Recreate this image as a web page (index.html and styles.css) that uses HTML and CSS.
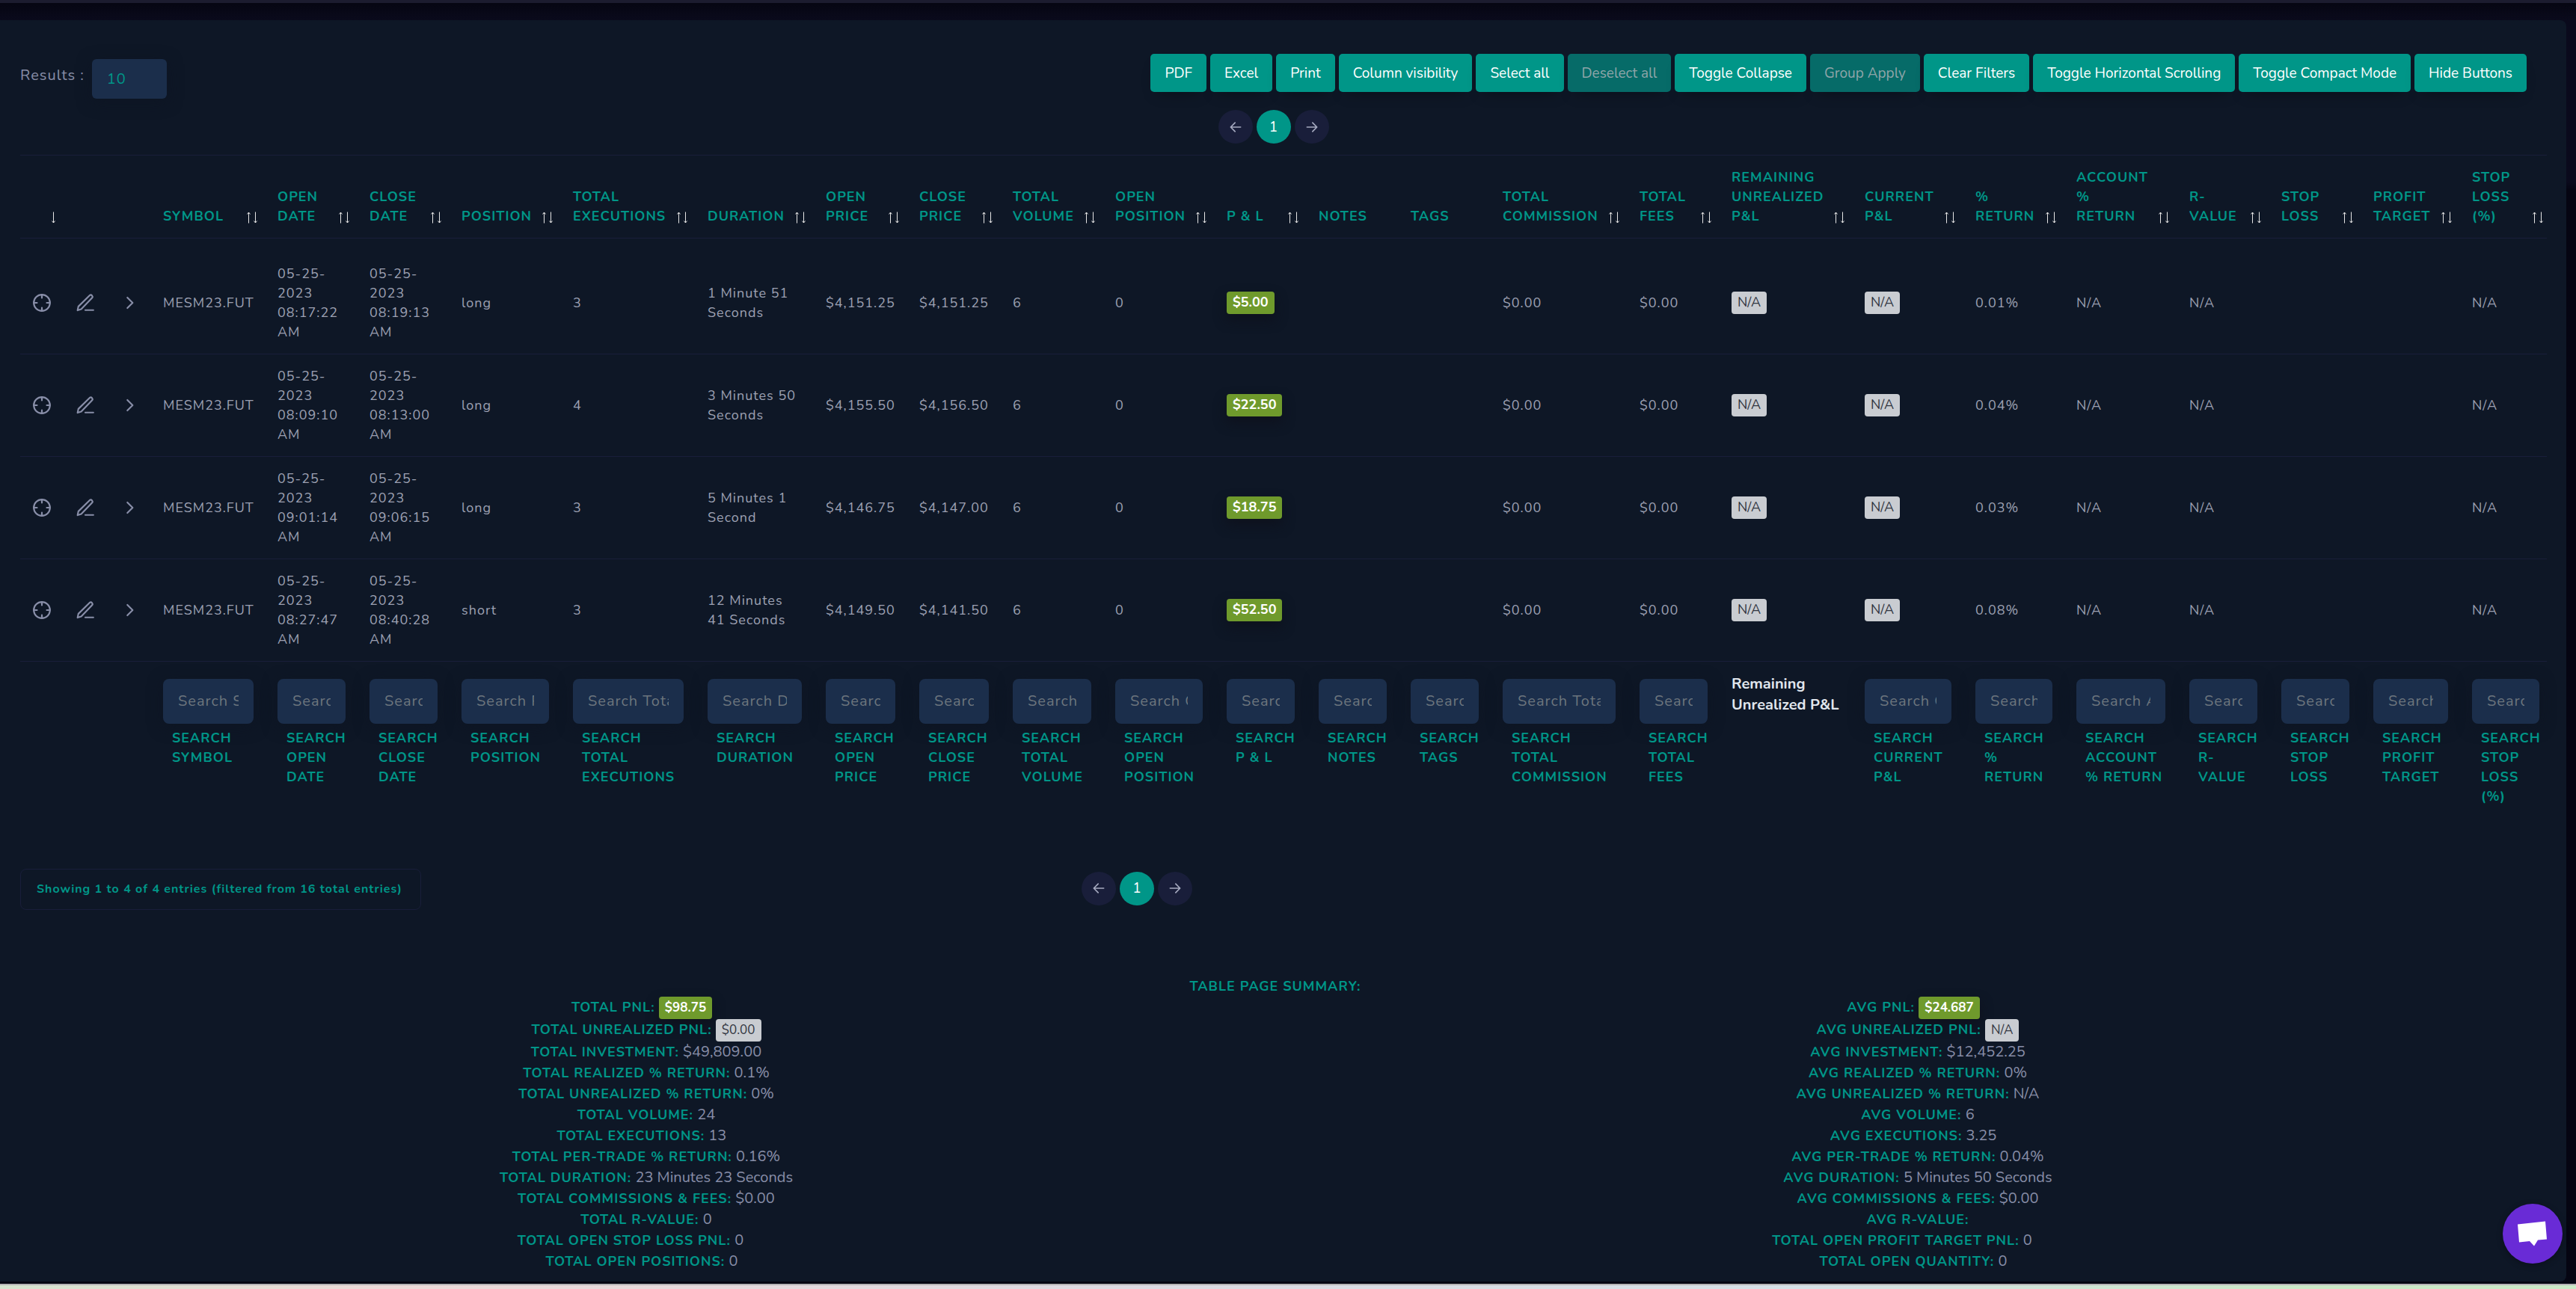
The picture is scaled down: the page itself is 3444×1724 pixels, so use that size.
FILE: index.html
```html
<!DOCTYPE html>
<html lang="en">
<head>
  <meta charset="UTF-8">
  <meta name="viewport" content="width=device-width, initial-scale=1.0">
  <title>Trades</title>
  <link rel="stylesheet" href="styles.css">
</head>
<body>
  <!-- Shared icons -->
  <svg class="icon-defs" aria-hidden="true">
    <symbol id="icon-sort" viewBox="0 0 16 16">
      <path d="M3.500 15.500V1M1.500 3.500L3.500 1L5.500 3.500M12.500 .5V15M10.500 12.500L12.500 15L14.500 12.500"></path>
    </symbol>
    <symbol id="icon-down" viewBox="0 0 16 16">
      <path d="M12.500 .5V15M10.500 12.500L12.500 15L14.500 12.500"></path>
    </symbol>
    <symbol id="icon-target" viewBox="0 0 24 24">
      <circle cx="12" cy="12" r="10"></circle>
      <path d="M22 12h-4M6 12H2M12 6V2M12 22v-4"></path>
    </symbol>
    <symbol id="icon-edit" viewBox="0 0 24 24">
      <path d="M12 21h10M17.500 2.700a2.200 2.200 0 0 1 3 3.100L7 19.800L2.500 21.300L3.500 16.500Z"></path>
    </symbol>
    <symbol id="icon-chevron" viewBox="0 0 24 24">
      <path d="M9.500 18.500l6.500-6.500-6.500-6.500"></path>
    </symbol>
    <symbol id="icon-prev" viewBox="0 0 24 24">
      <path d="M20 12H5M11 5l-7 7 7 7"></path>
    </symbol>
    <symbol id="icon-next" viewBox="0 0 24 24">
      <path d="M4 12h15M13 5l7 7-7 7"></path>
    </symbol>
  </svg>

  <main class="page">
    <div class="card">
      <!-- Toolbar -->
      <div class="toolbar">
        <div class="length">
          <label for="results">Results :</label>
          <select id="results" class="length-select">
            <option>10</option>
            <option>25</option>
            <option>50</option>
          </select>
        </div>
        <div class="buttons">
          <button class="btn">PDF</button>
          <button class="btn">Excel</button>
          <button class="btn">Print</button>
          <button class="btn">Column visibility</button>
          <button class="btn">Select all</button>
          <button class="btn" disabled>Deselect all</button>
          <button class="btn">Toggle Collapse</button>
          <button class="btn" disabled>Group Apply</button>
          <button class="btn">Clear Filters</button>
          <button class="btn">Toggle Horizontal Scrolling</button>
          <button class="btn">Toggle Compact Mode</button>
          <button class="btn">Hide Buttons</button>
        </div>
      </div>

      <nav class="pager" aria-label="Pages">
        <button class="page-btn" aria-label="Previous"><svg class="icon"><use href="#icon-prev"></use></svg></button>
        <button class="page-btn active">1</button>
        <button class="page-btn" aria-label="Next"><svg class="icon"><use href="#icon-next"></use></svg></button>
      </nav>

      <!-- Trades table -->
      <table class="trades">
        <colgroup>
          <col class="w-icon"><col class="w-icon"><col class="w-expand">
          <col class="w-symbol">
          <col class="w-s"><col class="w-s">
          <col class="w-position">
          <col class="w-executions">
          <col class="w-duration">
          <col class="w-price"><col class="w-price">
          <col class="w-volume">
          <col class="w-position">
          <col class="w-s"><col class="w-s"><col class="w-s">
          <col class="w-commission">
          <col class="w-s">
          <col class="w-unrealized">
          <col class="w-current">
          <col class="w-return">
          <col class="w-account">
          <col class="w-s"><col class="w-s">
          <col class="w-target">
          <col class="w-last">
        </colgroup>
        <thead>
          <tr>
            <th><div class="head"><svg class="sort"><use href="#icon-down"></use></svg></div></th>
            <th></th>
            <th></th>
            <th><div class="head">Symbol<svg class="sort"><use href="#icon-sort"></use></svg></div></th>
            <th><div class="head">Open<br>Date<svg class="sort"><use href="#icon-sort"></use></svg></div></th>
            <th><div class="head">Close<br>Date<svg class="sort"><use href="#icon-sort"></use></svg></div></th>
            <th><div class="head">Position<svg class="sort"><use href="#icon-sort"></use></svg></div></th>
            <th><div class="head">Total<br>Executions<svg class="sort"><use href="#icon-sort"></use></svg></div></th>
            <th><div class="head">Duration<svg class="sort"><use href="#icon-sort"></use></svg></div></th>
            <th><div class="head">Open<br>Price<svg class="sort"><use href="#icon-sort"></use></svg></div></th>
            <th><div class="head">Close<br>Price<svg class="sort"><use href="#icon-sort"></use></svg></div></th>
            <th><div class="head">Total<br>Volume<svg class="sort"><use href="#icon-sort"></use></svg></div></th>
            <th><div class="head">Open<br>Position<svg class="sort"><use href="#icon-sort"></use></svg></div></th>
            <th><div class="head">P &amp; L<svg class="sort"><use href="#icon-sort"></use></svg></div></th>
            <th>Notes</th>
            <th>Tags</th>
            <th><div class="head">Total<br>Commission<svg class="sort"><use href="#icon-sort"></use></svg></div></th>
            <th><div class="head">Total<br>Fees<svg class="sort"><use href="#icon-sort"></use></svg></div></th>
            <th><div class="head">Remaining<br>Unrealized<br>P&amp;L<svg class="sort"><use href="#icon-sort"></use></svg></div></th>
            <th><div class="head">Current<br>P&amp;L<svg class="sort"><use href="#icon-sort"></use></svg></div></th>
            <th><div class="head">%<br>Return<svg class="sort"><use href="#icon-sort"></use></svg></div></th>
            <th><div class="head">Account<br>%<br>Return<svg class="sort"><use href="#icon-sort"></use></svg></div></th>
            <th><div class="head">R-<br>Value<svg class="sort"><use href="#icon-sort"></use></svg></div></th>
            <th><div class="head">Stop<br>Loss<svg class="sort"><use href="#icon-sort"></use></svg></div></th>
            <th><div class="head">Profit<br>Target<svg class="sort"><use href="#icon-sort"></use></svg></div></th>
            <th><div class="head">Stop<br>Loss<br>(%)<svg class="sort"><use href="#icon-sort"></use></svg></div></th>
          </tr>
        </thead>
        <tbody>
          <tr class="spacer"><td colspan="26"></td></tr>
          <tr>
            <td class="action"><svg class="icon"><use href="#icon-target"></use></svg></td>
            <td class="action"><svg class="icon"><use href="#icon-edit"></use></svg></td>
            <td class="action"><svg class="icon"><use href="#icon-chevron"></use></svg></td>
            <td>MESM23.FUT</td>
            <td>05-25-<br>2023<br>08:17:22<br>AM</td>
            <td>05-25-<br>2023<br>08:19:13<br>AM</td>
            <td>long</td>
            <td>3</td>
            <td>1 Minute 51<br>Seconds</td>
            <td>$4,151.25</td>
            <td>$4,151.25</td>
            <td>6</td>
            <td>0</td>
            <td><span class="badge win">$5.00</span></td>
            <td></td>
            <td></td>
            <td>$0.00</td>
            <td>$0.00</td>
            <td><span class="badge">N/A</span></td>
            <td><span class="badge">N/A</span></td>
            <td>0.01%</td>
            <td>N/A</td>
            <td>N/A</td>
            <td></td>
            <td></td>
            <td>N/A</td>
          </tr>
          <tr>
            <td class="action"><svg class="icon"><use href="#icon-target"></use></svg></td>
            <td class="action"><svg class="icon"><use href="#icon-edit"></use></svg></td>
            <td class="action"><svg class="icon"><use href="#icon-chevron"></use></svg></td>
            <td>MESM23.FUT</td>
            <td>05-25-<br>2023<br>08:09:10<br>AM</td>
            <td>05-25-<br>2023<br>08:13:00<br>AM</td>
            <td>long</td>
            <td>4</td>
            <td>3 Minutes 50<br>Seconds</td>
            <td>$4,155.50</td>
            <td>$4,156.50</td>
            <td>6</td>
            <td>0</td>
            <td><span class="badge win">$22.50</span></td>
            <td></td>
            <td></td>
            <td>$0.00</td>
            <td>$0.00</td>
            <td><span class="badge">N/A</span></td>
            <td><span class="badge">N/A</span></td>
            <td>0.04%</td>
            <td>N/A</td>
            <td>N/A</td>
            <td></td>
            <td></td>
            <td>N/A</td>
          </tr>
          <tr>
            <td class="action"><svg class="icon"><use href="#icon-target"></use></svg></td>
            <td class="action"><svg class="icon"><use href="#icon-edit"></use></svg></td>
            <td class="action"><svg class="icon"><use href="#icon-chevron"></use></svg></td>
            <td>MESM23.FUT</td>
            <td>05-25-<br>2023<br>09:01:14<br>AM</td>
            <td>05-25-<br>2023<br>09:06:15<br>AM</td>
            <td>long</td>
            <td>3</td>
            <td>5 Minutes 1<br>Second</td>
            <td>$4,146.75</td>
            <td>$4,147.00</td>
            <td>6</td>
            <td>0</td>
            <td><span class="badge win">$18.75</span></td>
            <td></td>
            <td></td>
            <td>$0.00</td>
            <td>$0.00</td>
            <td><span class="badge">N/A</span></td>
            <td><span class="badge">N/A</span></td>
            <td>0.03%</td>
            <td>N/A</td>
            <td>N/A</td>
            <td></td>
            <td></td>
            <td>N/A</td>
          </tr>
          <tr>
            <td class="action"><svg class="icon"><use href="#icon-target"></use></svg></td>
            <td class="action"><svg class="icon"><use href="#icon-edit"></use></svg></td>
            <td class="action"><svg class="icon"><use href="#icon-chevron"></use></svg></td>
            <td>MESM23.FUT</td>
            <td>05-25-<br>2023<br>08:27:47<br>AM</td>
            <td>05-25-<br>2023<br>08:40:28<br>AM</td>
            <td>short</td>
            <td>3</td>
            <td>12 Minutes<br>41 Seconds</td>
            <td>$4,149.50</td>
            <td>$4,141.50</td>
            <td>6</td>
            <td>0</td>
            <td><span class="badge win">$52.50</span></td>
            <td></td>
            <td></td>
            <td>$0.00</td>
            <td>$0.00</td>
            <td><span class="badge">N/A</span></td>
            <td><span class="badge">N/A</span></td>
            <td>0.08%</td>
            <td>N/A</td>
            <td>N/A</td>
            <td></td>
            <td></td>
            <td>N/A</td>
          </tr>
        </tbody>
        <tfoot>
          <tr>
            <td></td>
            <td></td>
            <td></td>
            <td><input id="s-symbol" type="text" placeholder="Search Symbol"><label for="s-symbol">Search<br>Symbol</label></td>
            <td><input id="s-open-date" type="text" placeholder="Search Open Date"><label for="s-open-date">Search<br>Open<br>Date</label></td>
            <td><input id="s-close-date" type="text" placeholder="Search Close Date"><label for="s-close-date">Search<br>Close<br>Date</label></td>
            <td><input id="s-position" type="text" placeholder="Search Position"><label for="s-position">Search<br>Position</label></td>
            <td><input id="s-executions" type="text" placeholder="Search Total Executions"><label for="s-executions">Search<br>Total<br>Executions</label></td>
            <td><input id="s-duration" type="text" placeholder="Search Duration"><label for="s-duration">Search<br>Duration</label></td>
            <td><input id="s-open-price" type="text" placeholder="Search Open Price"><label for="s-open-price">Search<br>Open<br>Price</label></td>
            <td><input id="s-close-price" type="text" placeholder="Search Close Price"><label for="s-close-price">Search<br>Close<br>Price</label></td>
            <td><input id="s-volume" type="text" placeholder="Search Total Volume"><label for="s-volume">Search<br>Total<br>Volume</label></td>
            <td><input id="s-open-position" type="text" placeholder="Search Open Position"><label for="s-open-position">Search<br>Open<br>Position</label></td>
            <td><input id="s-pl" type="text" placeholder="Search P &amp; L"><label for="s-pl">Search<br>P &amp; L</label></td>
            <td><input id="s-notes" type="text" placeholder="Search Notes"><label for="s-notes">Search<br>Notes</label></td>
            <td><input id="s-tags" type="text" placeholder="Search Tags"><label for="s-tags">Search<br>Tags</label></td>
            <td><input id="s-commission" type="text" placeholder="Search Total Commission"><label for="s-commission">Search<br>Total<br>Commission</label></td>
            <td><input id="s-fees" type="text" placeholder="Search Total Fees"><label for="s-fees">Search<br>Total<br>Fees</label></td>
            <td class="foot-title">Remaining<br>Unrealized P&amp;L</td>
            <td><input id="s-current" type="text" placeholder="Search Current P&amp;L"><label for="s-current">Search<br>Current<br>P&amp;L</label></td>
            <td><input id="s-return" type="text" placeholder="Search % Return"><label for="s-return">Search<br>%<br>Return</label></td>
            <td><input id="s-account" type="text" placeholder="Search Account % Return"><label for="s-account">Search<br>Account<br>% Return</label></td>
            <td><input id="s-rvalue" type="text" placeholder="Search R-Value"><label for="s-rvalue">Search<br>R-<br>Value</label></td>
            <td><input id="s-stop" type="text" placeholder="Search Stop Loss"><label for="s-stop">Search<br>Stop<br>Loss</label></td>
            <td><input id="s-target" type="text" placeholder="Search Profit Target"><label for="s-target">Search<br>Profit<br>Target</label></td>
            <td><input id="s-stop-pct" type="text" placeholder="Search Stop Loss (%)"><label for="s-stop-pct">Search<br>Stop<br>Loss<br>(%)</label></td>
          </tr>
        </tfoot>
      </table>

      <div class="table-bottom">
        <div class="info">Showing 1 to 4 of 4 entries (filtered from 16 total entries)</div>
        <nav class="pager" aria-label="Pages">
          <button class="page-btn" aria-label="Previous"><svg class="icon"><use href="#icon-prev"></use></svg></button>
          <button class="page-btn active">1</button>
          <button class="page-btn" aria-label="Next"><svg class="icon"><use href="#icon-next"></use></svg></button>
        </nav>
      </div>

      <!-- Summary -->
      <h6 class="summary-title">Table Page Summary:</h6>
      <div class="summary">
        <div class="summary-col">
          <div class="inset"><b>Total PnL:</b> <span class="badge win">$98.75</span></div>
          <div><b>Total Unrealized PnL:</b> <span class="badge">$0.00</span></div>
          <div><b>Total Investment:</b> $49,809.00</div>
          <div><b>Total Realized % Return:</b> 0.1%</div>
          <div><b>Total Unrealized % Return:</b> 0%</div>
          <div><b>Total Volume:</b> 24</div>
          <div class="inset"><b>Total Executions:</b> 13</div>
          <div><b>Total Per-Trade % Return:</b> 0.16%</div>
          <div><b>Total Duration:</b> 23 Minutes 23 Seconds</div>
          <div><b>Total Commissions &amp; Fees:</b> $0.00</div>
          <div><b>Total R-Value:</b> 0</div>
          <div class="inset-wide"><b>Total Open Stop Loss PnL:</b> 0</div>
          <div class="inset"><b>Total Open Positions:</b> 0</div>
        </div>
        <div class="summary-col">
          <div class="inset"><b>Avg PnL:</b> <span class="badge win">$24.687</span></div>
          <div><b>Avg Unrealized PnL:</b> <span class="badge">N/A</span></div>
          <div><b>Avg Investment:</b> $12,452.25</div>
          <div><b>Avg Realized % Return:</b> 0%</div>
          <div><b>Avg Unrealized % Return:</b> N/A</div>
          <div><b>Avg Volume:</b> 6</div>
          <div class="inset"><b>Avg Executions:</b> 3.25</div>
          <div><b>Avg Per-Trade % Return:</b> 0.04%</div>
          <div><b>Avg Duration:</b> 5 Minutes 50 Seconds</div>
          <div><b>Avg Commissions &amp; Fees:</b> $0.00</div>
          <div><b>Avg R-Value:</b></div>
          <div class="inset-wide"><b>Total Open Profit Target PnL:</b> 0</div>
          <div class="inset"><b>Total Open Quantity:</b> 0</div>
        </div>
      </div>
    </div>
  </main>
  <div class="bottom-strip"></div>

  <button class="chat" aria-label="Open chat">
    <svg class="chat-icon" viewBox="0 0 40 34">
      <path d="M0 4.500L37 0.500L39 24.500L27 25.500L22 33.500L16 27L2 28.500Z"></path>
    </svg>
  </button>
</body>
</html>
```
FILE: styles.css
```css
/* Base */
* {
  box-sizing: border-box;
}

body {
  margin: 0;
  background-color: #060612;
  color: #888ea8;
  font-family: 'Nunito', 'Lato', sans-serif;
  font-size: 20px;
  line-height: 28px;
}

button,
input,
select {
  font-family: inherit;
}

.icon-defs {
  display: none;
}

.icon {
  width: 26px;
  height: 26px;
  display: block;
  margin: 0 auto;
  fill: none;
  stroke: currentColor;
  stroke-width: 2;
  stroke-linecap: round;
  stroke-linejoin: round;
}

.page {
  border-top: 4px solid #1c1c2f;
  padding: 23px 13px 3px 0;
  background: linear-gradient(#060612 0, #0a0a1c 23px, #0a0a1c 240px, #050512 250px);
}

.card {
  background-color: #0e1726;
  border-radius: 0 8px 8px 0;
  padding: 45px 26px 13px 27px;
}

/* Toolbar */
.toolbar {
  display: flex;
  justify-content: space-between;
  align-items: flex-start;
  padding-right: 27px;
}

.length {
  display: flex;
  align-items: center;
  gap: 10px;
  padding-top: 7px;
  letter-spacing: 1px;
}

.length label {
  padding-bottom: 10px;
}

.length-select {
  appearance: none;
  width: 100px;
  height: 53px;
  border: none;
  border-radius: 6px;
  padding: 0 20px;
  background-color: #1b2e4b;
  color: #009688;
  font-size: 20px;
  letter-spacing: 1px;
  box-shadow: 0 4px 20px rgba(14, 20, 34, 0.6);
}

.buttons {
  display: flex;
  gap: 5px;
}

.btn {
  height: 51px;
  padding: 0 19px;
  border: none;
  border-radius: 5px;
  background-color: #009688;
  color: #fff;
  font-size: 19px;
  box-shadow: 0 10px 20px -10px rgba(0, 0, 0, 0.4);
}

.btn:disabled {
  background-color: #066b68;
  color: #8fa5a9;
}

/* Pager */
.pager {
  display: flex;
  justify-content: center;
  gap: 5px;
  padding-right: 27px;
}

.page-btn {
  width: 46px;
  height: 45px;
  border: none;
  border-radius: 50%;
  padding: 0;
  background-color: #191e3a;
  color: #a6aac0;
  font-size: 19px;
}

.page-btn .icon {
  width: 20px;
  height: 20px;
}

.page-btn.active {
  background-color: #009688;
  color: #fff;
}

.card > .pager {
  margin: 15px 0;
}

/* Trades table */
.trades {
  width: 100%;
  table-layout: fixed;
  border-collapse: collapse;
  font-size: 18px;
  line-height: 26px;
  letter-spacing: 1px;
}

.w-icon { width: 58px; }
.w-expand { width: 59px; }
.w-s { width: 123px; }
.w-symbol { width: 153px; }
.w-position { width: 149px; }
.w-executions { width: 180px; }
.w-duration { width: 158px; }
.w-price { width: 125px; }
.w-volume { width: 137px; }
.w-commission { width: 183px; }
.w-unrealized { width: 178px; }
.w-current { width: 148px; }
.w-return { width: 135px; }
.w-account { width: 151px; }
.w-target { width: 132px; }
.w-last { width: 116px; }

.trades th,
.trades td {
  padding: 16px;
  text-align: left;
  white-space: nowrap;
}

.trades thead tr {
  border-top: 1px solid #191e3a;
  border-bottom: 1px solid #191e3a;
}

.trades th {
  height: 111px;
  vertical-align: bottom;
  color: #009688;
  font-weight: 700;
  text-transform: uppercase;
}

.trades th:last-child,
.trades tfoot td:last-child {
  padding-right: 10px;
}

.head {
  position: relative;
  min-height: 26px;
}

/* sort arrows hang into the cell padding */
.sort {
  position: absolute;
  right: -6px;
  bottom: 3px;
  width: 16px;
  height: 16px;
  fill: none;
  stroke: #e6e6e6;
}

.trades .spacer td {
  height: 18px;
  padding: 0;
}

.trades tbody tr:not(.spacer) {
  border-bottom: 1px solid #191e3a;
}

.trades tbody td {
  color: #9da1b3;
}

.trades .action {
  padding: 0;
  color: #888ea8;
}

.badge {
  display: inline-block;
  height: 30px;
  padding: 0 8px;
  border-radius: 4px;
  background-color: #c9ccd1;
  color: #30343f;
  font-size: 18px;
  line-height: 29px;
  letter-spacing: 0;
  vertical-align: middle;
}

.badge.win {
  background-color: #6f9a2c;
  color: #fff;
  font-weight: 700;
  box-shadow: 0 8px 16px rgba(14, 16, 28, 0.8);
}

/* Column search */
.trades tfoot td {
  vertical-align: top;
  padding-top: 23px;
  padding-bottom: 0;
}

.trades tfoot input {
  display: block;
  width: 100%;
  height: 60px;
  padding: 0 20px;
  border: none;
  border-radius: 8px;
  background-color: #1b2e4b;
  color: #009688;
  font-size: 20px;
  letter-spacing: 1px;
  box-shadow: 0 4px 20px rgba(14, 20, 34, 0.6);
}

.trades tfoot input::placeholder {
  color: #6c757d;
}

.trades tfoot label {
  display: block;
  padding: 6px 0 0 12px;
  color: #009688;
  font-weight: 700;
  text-transform: uppercase;
}

.trades tfoot .foot-title {
  padding-top: 16px;
  color: #e0e6ed;
  font-size: 20px;
  font-weight: 700;
  line-height: 28px;
  letter-spacing: 0;
}

/* Below the table */
.table-bottom {
  display: grid;
  grid-template-columns: 1fr auto 1fr;
  align-items: start;
  padding: 84px 392px 0 0;
}

.info {
  justify-self: start;
  border: 1px solid #191e3a;
  border-radius: 8px;
  padding: 13px 24px 13px 21px;
  color: #009688;
  font-size: 16px;
  font-weight: 700;
  line-height: 27px;
  letter-spacing: 1px;
}

.table-bottom .pager {
  padding: 4px 0 0;
}

/* Summary */
.summary-title {
  margin: 88px 0 0;
  padding-right: 22px;
  color: #009688;
  font-size: 18px;
  font-weight: 700;
  line-height: 28px;
  letter-spacing: 1px;
  text-align: center;
  text-transform: uppercase;
}

.summary {
  display: flex;
  margin: 0 -9px 0 -13px;
}

.summary-col {
  flex: 1;
  text-align: center;
}

.summary-col b {
  color: #009688;
  font-size: 18px;
  font-weight: 700;
  line-height: 1;
  letter-spacing: 1px;
  text-transform: uppercase;
}

.summary-col .badge {
  font-size: 17px;
  vertical-align: top;
}

.inset {
  padding-right: 12px;
}

.inset-wide {
  padding-right: 42px;
}

/* Window edge */
.bottom-strip {
  height: 7px;
  border-top: 2px solid #b5b3b5;
  background: linear-gradient(90deg, #d6e3cf, #ecd9d8 15%, #dcdae2 45%, #d6e0e6 70%, #cbe8c6 90%);
}

/* Chat launcher */
.chat {
  position: fixed;
  right: 18px;
  bottom: 34px;
  width: 80px;
  height: 80px;
  border: none;
  border-radius: 50%;
  padding: 0;
  background-color: #692bd6;
  box-shadow: 0 2px 8px rgba(0, 0, 0, 0.3);
}

.chat-icon {
  display: block;
  width: 40px;
  height: 34px;
  margin: 0 auto;
  fill: #fff;
}
```
